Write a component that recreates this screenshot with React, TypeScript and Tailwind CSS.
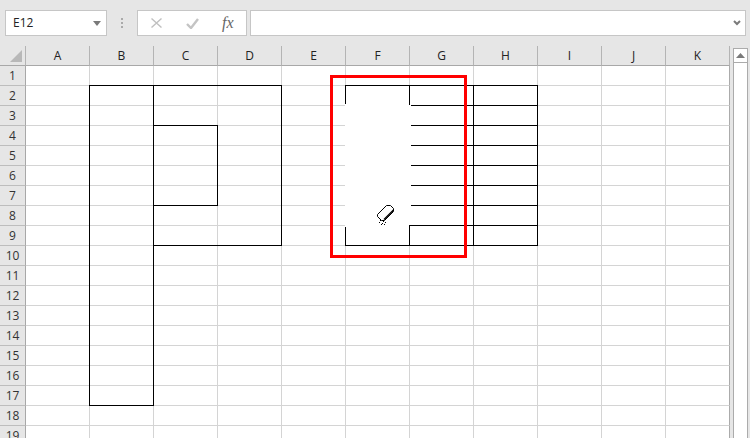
const COLS = ['A', 'B', 'C', 'D', 'E', 'F', 'G', 'H', 'I', 'J', 'K']
const ROWS = Array.from({ length: 19 }, (_, i) => i + 1)

// col index (A = 0) -> rows whose right edge is a black border
function blackRight(row: number, col: number) {
  if (col <= 1) return row >= 2 && row <= 17
  if (col === 2) return row >= 4 && row <= 7
  if (col >= 3 && col <= 7) return row >= 2 && row <= 9
  return false
}

function blackBottom(row: number, col: number) {
  if (row === 1) return (col >= 1 && col <= 3) || (col >= 5 && col <= 7)
  if (col === 1) return row === 17
  if (col === 2) return row === 3 || row === 7 || row === 9
  if (col === 3) return row === 9
  if (col === 5) return row === 9
  if (col === 6 || col === 7) return row >= 2 && row <= 9
  return false
}

function Cell({ row, col }: { row: number; col: number }) {
  const right = col === 10 ? 'border-r-[#ababab]' : blackRight(row, col) ? 'border-r-black' : 'border-r-[#d4d4d4]'
  const bottom = blackBottom(row, col) ? 'border-b-black' : 'border-b-[#d4d4d4]'
  // the pixel where borders meet stays black when any border touching it is black
  const corner = blackRight(row, col) || blackRight(row + 1, col) || blackBottom(row, col) || blackBottom(row, col + 1)
  return (
    <div className={`relative border-r border-b bg-white ${right} ${bottom}`}>
      {corner && <span className="absolute -right-px -bottom-px w-px h-px bg-black" />}
    </div>
  )
}

function Eraser() {
  return (
    <svg className="absolute left-[375px] top-[156px]" width="24" height="24" viewBox="0 0 24 24">
      <path d="M2.5 12.5 L11.5 3.5 H15.5 L18.5 6.5 V9.5 L9.5 18.5 H6.5 L2.5 14.5 Z" fill="#fff" stroke="#000" strokeWidth="1" />
      <path d="M18 7.5 V9.5 L9.5 18 L8.5 17 Z" fill="#000" />
      <path d="M5 18h1v1H5zM8 19h1v1H8zM10 20h1v1h-1zM4 20h1v1H4zM7 21h1v1H7zM6 22h1v1H6zM9 22h1v1H9z" fill="#000" />
    </svg>
  )
}

export default function App() {
  return (
    <div className="w-[750px] h-[438px] overflow-hidden bg-[#e6e6e6] flex flex-col font-['Open_Sans','Noto_Sans',sans-serif]">
      <div className="h-[46px] shrink-0 flex items-start pt-[10px] pl-[5px]">
        <div className="w-[102px] h-[26px] bg-white border border-[#c6c6c6] flex items-center justify-between pl-[7px] pr-[5px] text-[12px] text-[#222]">
          <span>E12</span>
          <svg width="8" height="5" viewBox="0 0 8 5">
            <path d="M0 0h8L4 5z" fill="#7a7a7a" />
          </svg>
        </div>
        <div className="w-[30px] flex flex-col items-center gap-[2px] pt-[8px]">
          <div className="w-[2px] h-[2px] bg-[#aaa]" />
          <div className="w-[2px] h-[2px] bg-[#aaa]" />
          <div className="w-[2px] h-[2px] bg-[#aaa]" />
        </div>
        <div className="w-[110px] h-[26px] bg-white border border-[#c6c6c6] flex items-center pl-[13px]">
          <svg width="11" height="10" viewBox="0 0 11 10">
            <path d="M.5 .5l10 9M10.5 .5L.5 9.5" stroke="#c0c0c0" strokeWidth="1.4" fill="none" />
          </svg>
          <svg className="ml-[24px]" width="13" height="11" viewBox="0 0 13 11">
            <path d="M1 6l4 4 7-9" stroke="#c4c4c4" strokeWidth="2.4" fill="none" />
          </svg>
          <span className="ml-[23px] font-['Liberation_Serif',serif] italic text-[16px] leading-none text-[#666]">fx</span>
        </div>
        <div className="ml-[3px] w-[496px] h-[26px] bg-white border border-[#c6c6c6] flex items-center justify-end pr-[4px]">
          <svg width="8" height="6" viewBox="0 0 8 6">
            <path d="M1 1l3 3 3-3" stroke="#7a7a7a" strokeWidth="2" fill="none" />
          </svg>
        </div>
      </div>
      <div className="relative flex flex-1 min-h-0">
        <div className="w-[730px] shrink-0 grid grid-cols-[26px_repeat(11,64px)] auto-rows-[20px]">
          <div className="border-r border-b border-r-[#b4b4b4] border-b-[#a8a8a8] flex items-end justify-end pr-[3px] pb-[3px]">
            <svg width="12" height="12" viewBox="0 0 12 12">
              <path d="M12 0v12H0z" fill="#b8b8b8" />
            </svg>
          </div>
          {COLS.map((c) => (
            <div key={c} className="border-r border-b border-r-[#b4b4b4] border-b-[#a8a8a8] flex items-center justify-center text-[12px] text-[#222]">
              {c}
            </div>
          ))}
          {ROWS.map((r) => (
            <div key={r} className="contents">
              <div className="border-r border-b border-r-[#a8a8a8] border-b-[#bdbdbd] flex items-center justify-center text-[12px] text-[#333]">{r}</div>
              {COLS.map((c, i) => (
                <Cell key={c} row={r} col={i} />
              ))}
            </div>
          ))}
        </div>
        <div className="ml-[3px] w-[15px] flex flex-col pt-[2px]">
          <div className="h-[15px] shrink-0 bg-white border border-[#ababab] flex items-center justify-center">
            <svg width="9" height="5" viewBox="0 0 9 5">
              <path d="M4.5 0L9 5H0z" fill="#7a7a7a" />
            </svg>
          </div>
          <div className="flex-1 bg-white border-x border-[#ababab]" />
        </div>
        {/* bits of border wiped by the eraser tool */}
        <div className="absolute left-[345px] top-[58px] w-[64px] h-[123px] bg-white" />
        <div className="absolute left-[409px] top-[59px] w-[2px] h-[120px] bg-white" />
        <Eraser />
        <div className="absolute left-[330px] top-[29px] w-[137px] h-[183px] border-[3px] border-[#ff0000]" />
      </div>
    </div>
  )
}
